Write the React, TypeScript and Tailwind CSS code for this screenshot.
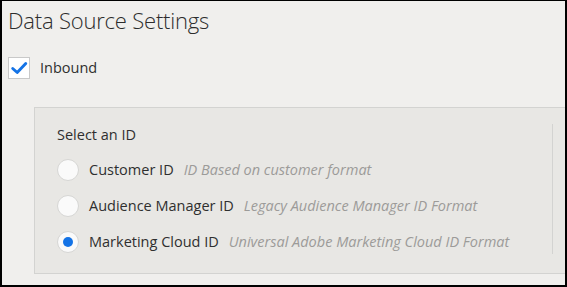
const options = [
  { label: 'Customer ID', hint: 'ID Based on customer format', checked: false },
  { label: 'Audience Manager ID', hint: 'Legacy Audience Manager ID Format', checked: false },
  { label: 'Marketing Cloud ID', hint: 'Universal Adobe Marketing Cloud ID Format', checked: true },
];

export default function App() {
  return (
    <div
      className="w-[567px] h-[287px] overflow-hidden bg-[#f0efed] border-black border-t border-l-2 border-r-2 border-b-2 text-[#2f2f2f]"
      style={{ fontFamily: '"Open Sans", "Noto Sans", sans-serif' }}
    >
      <h1 className="pl-[6px] pt-[5px] text-[22px] font-light leading-[28px] tracking-[-0.2px] text-[#2c2c2c]">
        Data Source Settings
      </h1>

      <label className="mt-[23px] ml-[6px] flex items-center gap-[10px]">
        <span className="flex h-[22px] w-[22px] items-center justify-center border border-[#c9c9c9] bg-white">
          <svg viewBox="0 0 20 20" className="h-[18px] w-[18px]">
            <path d="M3 10.5 L8 15 L17.5 5" fill="none" stroke="#1473e6" strokeWidth="3.2" strokeLinecap="round" strokeLinejoin="round" />
          </svg>
        </span>
        <span className="text-[14.5px] leading-[22px]">Inbound</span>
      </label>

      <div className="mt-[28px] ml-[32px] flex w-[560px] h-[167px] border border-[#d3d3d1] bg-[#e8e7e4]">
        <div className="flex-1 pl-[22px] pt-[16px]">
          <div className="text-[14.5px] leading-[22px]">Select an ID</div>
          <div className="mt-[13px] flex flex-col gap-[14px]">
            {options.map((o) => (
              <div key={o.label} className="flex items-center">
                <span className="flex h-[22px] w-[22px] items-center justify-center rounded-full border border-[#d6d6d4] bg-[#fafafa]">
                  {o.checked && <span className="h-[10px] w-[10px] rounded-full bg-[#1473e6]" />}
                </span>
                <span className="ml-[10px] text-[14.5px] leading-[22px]">{o.label}</span>
                <span className="ml-[10px] text-[14.5px] leading-[22px] italic text-[#9c9b99]">{o.hint}</span>
              </div>
            ))}
          </div>
        </div>
        <div className="mr-[40px] mt-[16px] mb-[19px] w-px bg-[#d3d3d1]" />
      </div>
    </div>
  );
}
